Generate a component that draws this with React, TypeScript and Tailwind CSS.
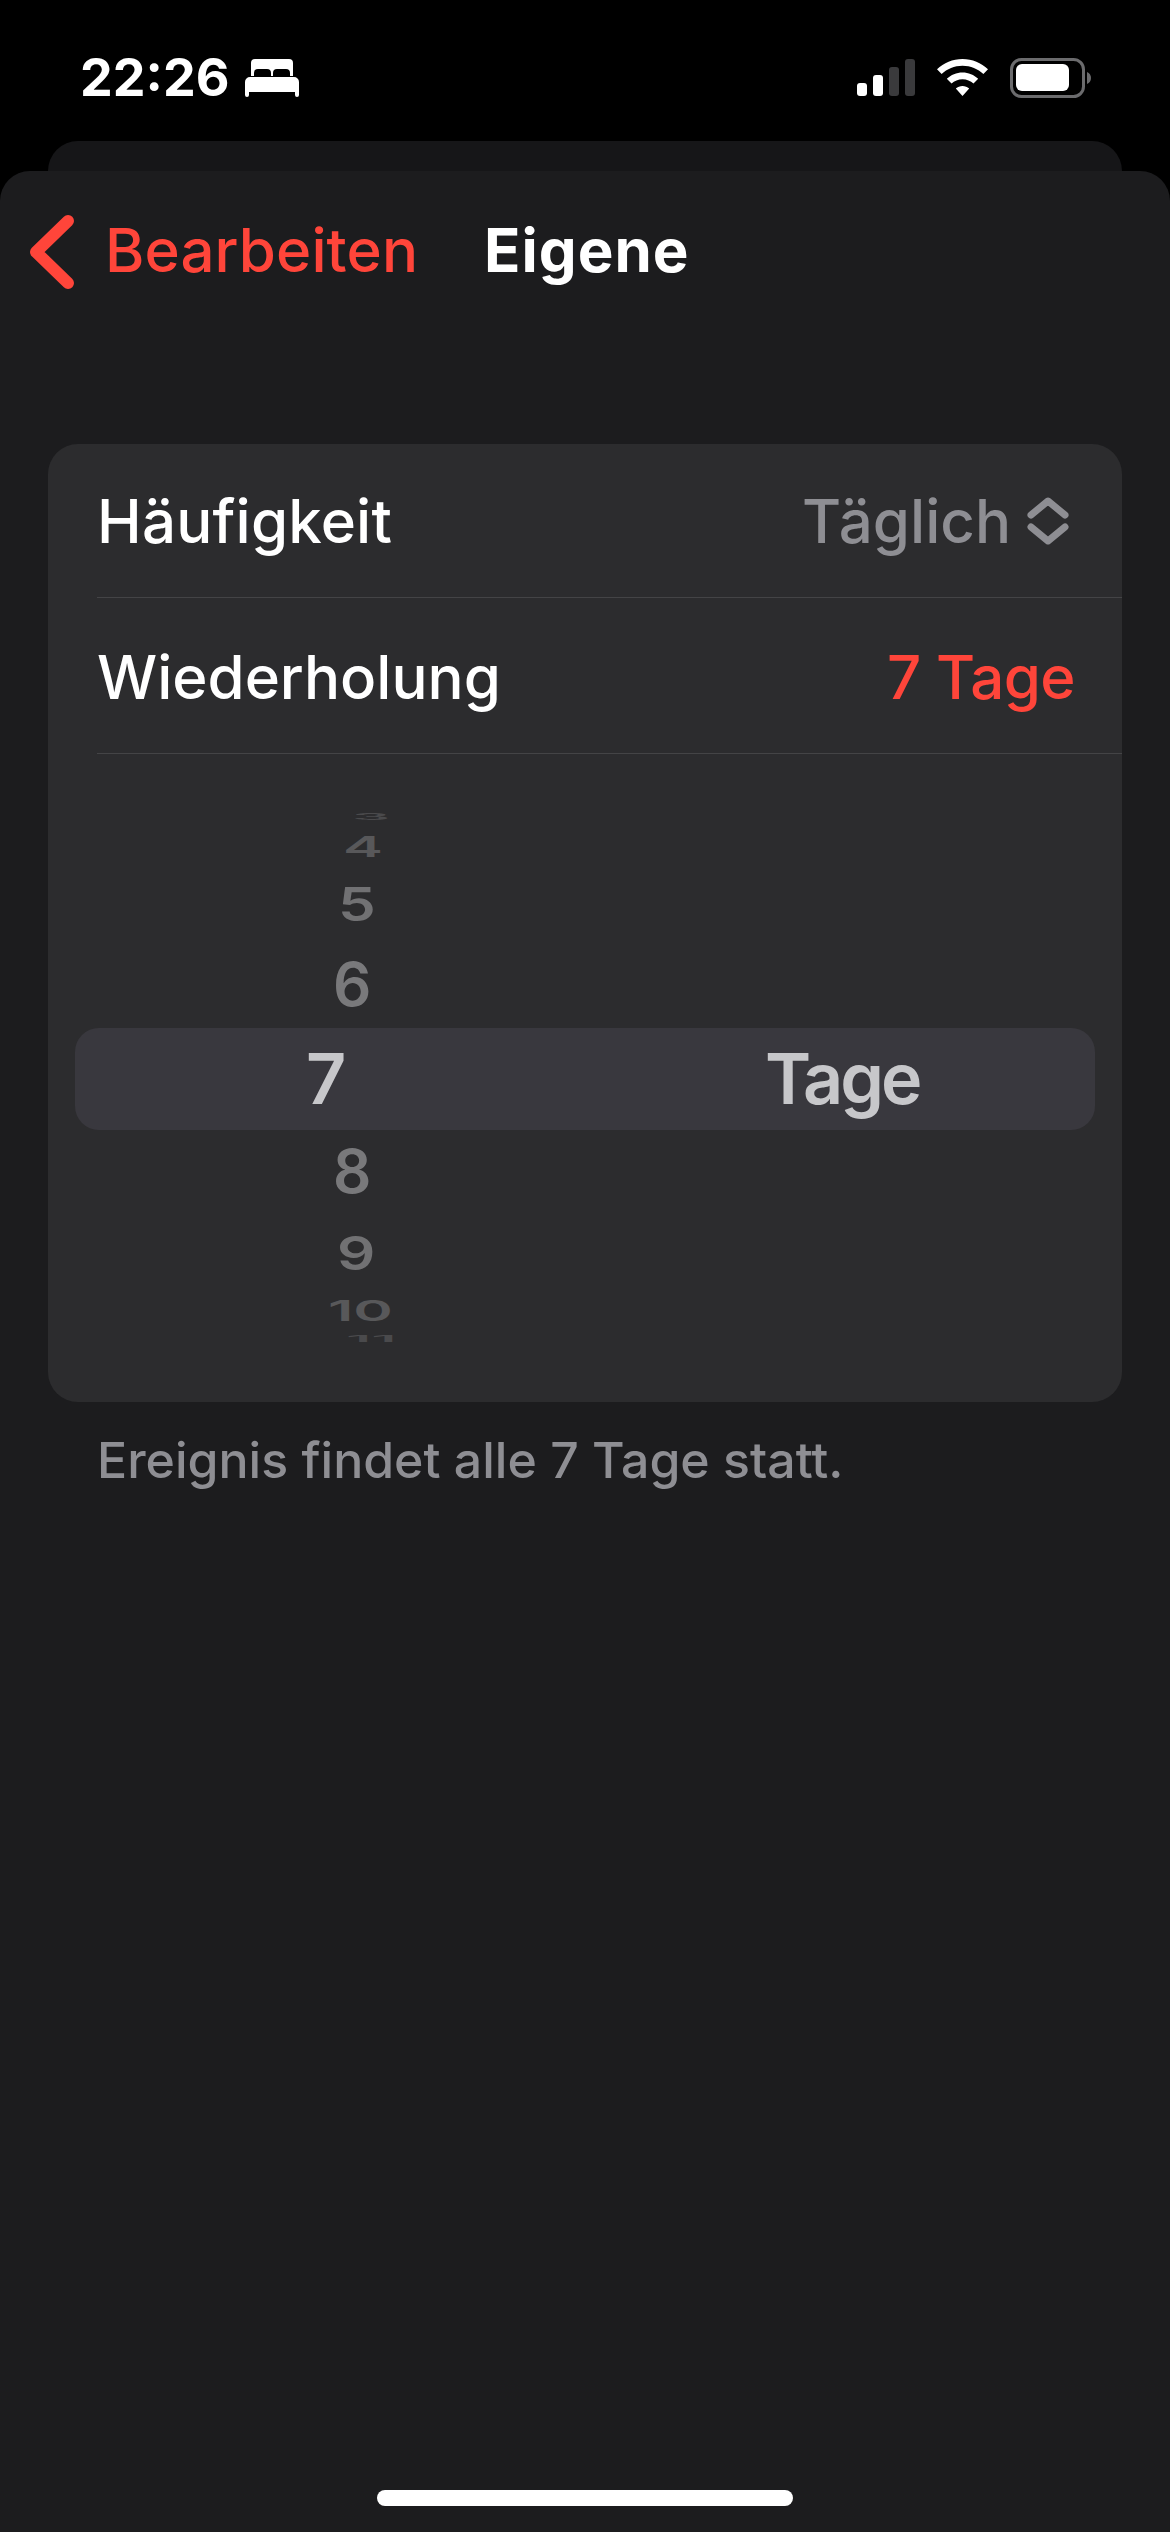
const wheelRows = [
  { label: "3", rowClass: "h-[14px] pl-[304px]", textClass: "scale-y-[0.14] text-[#4a4a4c]" },
  { label: "4", rowClass: "h-[44px] pl-[295px]", textClass: "scale-y-[0.48] text-[#58585a]" },
  { label: "5", rowClass: "h-[72px] pl-[290px]", textClass: "scale-y-[0.78] text-[#717173]" },
  { label: "6", rowClass: "h-[88px] pl-[285px]", textClass: "text-[#79797b]" },
];

const lowerRows = [
  { label: "8", rowClass: "h-[82px] pl-[285px]", textClass: "text-[#79797b]" },
  { label: "9", rowClass: "h-[82px] pl-[289px]", textClass: "scale-y-[0.78] text-[#717173]" },
  { label: "10", rowClass: "h-[32px] pl-[280px]", textClass: "scale-y-[0.48] text-[#58585a]" },
  { label: "11", rowClass: "h-[26px] pl-[298px]", textClass: "scale-y-[0.14] text-[#4a4a4c]" },
];

const WheelRow = ({ label, rowClass, textClass }: { label: string; rowClass: string; textClass: string }) => (
  <div className={`flex items-center overflow-hidden ${rowClass}`}>
    <span className={`inline-block text-[60px] leading-none font-semibold ${textClass}`}>{label}</span>
  </div>
);

const StatusBar = () => (
  <div className="flex h-[141px] justify-between pl-[80px] pr-[79px] pt-[58px]">
    <div className="flex h-[40px] items-center gap-[16px]">
      <span className="text-[52px] leading-none font-bold text-white">22:26</span>
      <svg width="54" height="38" viewBox="0 0 54 38" fill="white">
        <path
          fillRule="evenodd"
          d="M6 4a4 4 0 0 1 4-4h34a4 4 0 0 1 4 4v13h-3v-3a4 4 0 0 0-4-4h-9a4 4 0 0 0-4 4v3h-2v-3a4 4 0 0 0-4-4h-9a4 4 0 0 0-4 4v3H6z"
        />
        <path d="M5 18h44a5 5 0 0 1 5 5v13a2 2 0 0 1-4 0v-3H4v3a2 2 0 0 1-4 0V23a5 5 0 0 1 5-5z" />
      </svg>
    </div>
    <div className="flex h-[40px] items-end">
      <svg width="234" height="40" viewBox="0 0 234 40">
        <rect x="0" y="25" width="10" height="13" rx="3" fill="white" />
        <rect x="16" y="17" width="10" height="21" rx="3" fill="white" />
        <rect x="32" y="9" width="10" height="29" rx="3" fill="#3a3a3c" />
        <rect x="48" y="1" width="10" height="37" rx="3" fill="#3a3a3c" />
        <path
          d="M105.5 1c9.8 0 18.7 3.9 25.5 10.2l-4.6 4.8c-5.5-5.1-12.8-8.3-20.9-8.3s-15.4 3.2-20.9 8.3L80 11.2C86.8 4.900 95.700 1 105.500 1zM105.500 14.500c6 0 11.500 2.400 15.700 6.300l-4.700 4.800c-2.900-2.600-6.800-4.300-11-4.300s-8.100 1.700-11 4.300l-4.700-4.800c4.200-3.900 9.700-6.300 15.700-6.300zM105.500 28c2.500 0 4.900 1 6.700 2.600L105.500 38l-6.700-7.400c1.800-1.600 4.200-2.600 6.700-2.600z"
          fill="white"
        />
        <rect x="154.500" y="1.500" width="72" height="37" rx="10" fill="none" stroke="#6b6b6d" strokeWidth="3" />
        <rect x="159" y="6" width="53" height="27" rx="6" fill="white" />
        <path d="M230 14c2.500.8 4 3.200 4 6s-1.500 5.200-4 6z" fill="#6b6b6d" />
      </svg>
    </div>
  </div>
);

const App = () => {
  return (
    <div className="flex h-[2532px] w-[1170px] flex-col overflow-hidden bg-black font-[Inter,sans-serif]">
      <StatusBar />
      <div className="mx-[48px] h-[30px] shrink-0 rounded-t-[30px] bg-[#161618]" />
      <div className="flex flex-1 flex-col rounded-t-[30px] bg-[#1c1c1e]">
        <div className="flex h-[273px] shrink-0 items-start pl-[29px] pt-[44px]">
          <svg width="46" height="74" viewBox="0 0 46 74" fill="none">
            <path d="M39 6 7 37l32 31" stroke="#ff453a" strokeWidth="12" strokeLinecap="round" strokeLinejoin="round" />
          </svg>
          <span className="ml-[30px] mt-[5px] text-[60px] leading-none font-medium tracking-[0.1px] text-[#ff453a]">
            Bearbeiten
          </span>
          <span className="ml-[66px] mt-[5px] text-[60px] leading-none font-bold tracking-[1px] text-white">
            Eigene
          </span>
        </div>

        <div className="mx-[48px] h-[958px] shrink-0 overflow-hidden rounded-[30px] bg-[#2c2c2e]">
          <div className="ml-[49px] flex h-[154px] items-center justify-between border-b border-[#444446] pr-[49px]">
            <span className="text-[60px] leading-none font-medium tracking-[0.2px] text-white">Häufigkeit</span>
            <div className="flex items-center gap-[16px]">
              <span className="text-[60px] leading-none font-medium text-[#8e8e93]">Täglich</span>
              <svg width="42" height="48" viewBox="0 0 42 48" fill="none" className="mr-[4px]">
                <path
                  d="M4 18 21 4l17 14M4 30l17 14 17-14"
                  stroke="#8e8e93"
                  strokeWidth="7"
                  strokeLinecap="round"
                  strokeLinejoin="round"
                />
              </svg>
            </div>
          </div>
          <div className="ml-[49px] flex h-[156px] items-center justify-between border-b border-[#444446] pr-[47px]">
            <span className="mt-[3px] text-[60px] leading-none font-medium text-white">Wiederholung</span>
            <span className="mt-[3px] text-[60px] leading-none font-medium tracking-[-0.6px] text-[#ff453a]">
              7 Tage
            </span>
          </div>

          <div className="pt-[56px]">
            {wheelRows.map((row) => (
              <WheelRow key={row.label} {...row} />
            ))}
            <div className="mx-[27px] flex h-[102px] items-center rounded-[24px] bg-[#39383e] pl-[231px] font-semibold text-[#c7c7ca]">
              <span className="w-[459px] text-[70px] leading-none">7</span>
              <span className="text-[70px] leading-none tracking-[-3px]">Tage</span>
            </div>
            {lowerRows.map((row) => (
              <WheelRow key={row.label} {...row} />
            ))}
          </div>
        </div>

        <p className="ml-[97px] mt-[33px] text-[50px] leading-none font-medium text-[#8e8e93]">
          Ereignis findet alle 7 Tage statt.
        </p>

        <div className="mx-auto mb-[26px] mt-auto h-[16px] w-[416px] rounded-full bg-white" />
      </div>
    </div>
  );
};

export default App;
